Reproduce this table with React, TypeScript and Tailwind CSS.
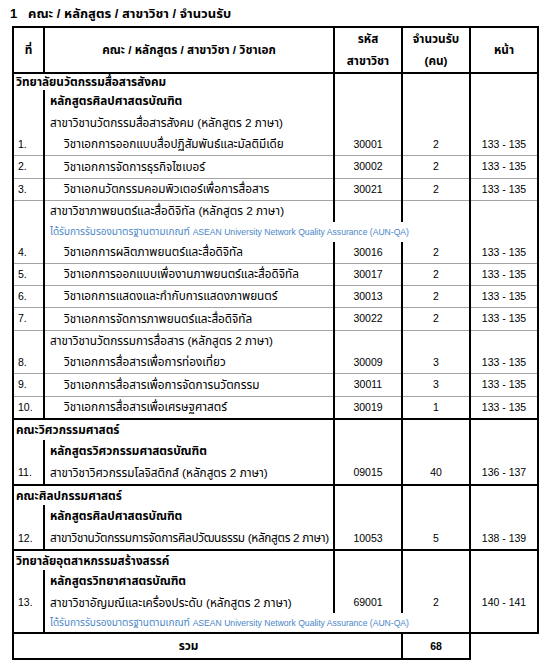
import React from 'react';

type Row =
  | { k: 'fac'; text: string; h: number }
  | { k: 'prog'; text: string; h: number }
  | { k: 'branch'; text: string; h: number }
  | { k: 'note'; h: number }
  | {
      k: 'item';
      no: string;
      text: string;
      code: string;
      n: string;
      pages: string;
      h: number;
      indent?: boolean;
      tight?: boolean;
    };

const rows: Row[] = [
  { k: 'fac', text: 'วิทยาลัยนวัตกรรมสื่อสารสังคม', h: 17 },
  { k: 'prog', text: 'หลักสูตรศิลปศาสตรบัณฑิต', h: 22 },
  { k: 'branch', text: 'สาขาวิชานวัตกรรมสื่อสารสังคม (หลักสูตร 2 ภาษา)', h: 21 },
  { k: 'item', no: '1.', text: 'วิชาเอกการออกแบบสื่อปฏิสัมพันธ์และมัลติมีเดีย', code: '30001', n: '2', pages: '133 - 135', h: 22, indent: true },
  { k: 'item', no: '2.', text: 'วิชาเอกการจัดการธุรกิจไซเบอร์', code: '30002', n: '2', pages: '133 - 135', h: 23, indent: true },
  { k: 'item', no: '3.', text: 'วิชาเอกนวัตกรรมคอมพิวเตอร์เพื่อการสื่อสาร', code: '30021', n: '2', pages: '133 - 135', h: 22, indent: true },
  { k: 'branch', text: 'สาขาวิชาภาพยนตร์และสื่อดิจิทัล (หลักสูตร 2 ภาษา)', h: 22 },
  { k: 'note', h: 20 },
  { k: 'item', no: '4.', text: 'วิชาเอกการผลิตภาพยนตร์และสื่อดิจิทัล', code: '30016', n: '2', pages: '133 - 135', h: 21, indent: true },
  { k: 'item', no: '5.', text: 'วิชาเอกการออกแบบเพื่องานภาพยนตร์และสื่อดิจิทัล', code: '30017', n: '2', pages: '133 - 135', h: 22, indent: true },
  { k: 'item', no: '6.', text: 'วิชาเอกการแสดงและกำกับการแสดงภาพยนตร์', code: '30013', n: '2', pages: '133 - 135', h: 22, indent: true },
  { k: 'item', no: '7.', text: 'วิชาเอกการจัดการภาพยนตร์และสื่อดิจิทัล', code: '30022', n: '2', pages: '133 - 135', h: 23, indent: true },
  { k: 'branch', text: 'สาขาวิชานวัตกรรมการสื่อสาร (หลักสูตร 2 ภาษา)', h: 22 },
  { k: 'item', no: '8.', text: 'วิชาเอกการสื่อสารเพื่อการท่องเที่ยว', code: '30009', n: '3', pages: '133 - 135', h: 21, indent: true },
  { k: 'item', no: '9.', text: 'วิชาเอกการสื่อสารเพื่อการจัดการนวัตกรรม', code: '30011', n: '3', pages: '133 - 135', h: 23, indent: true },
  { k: 'item', no: '10.', text: 'วิชาเอกการสื่อสารเพื่อเศรษฐศาสตร์', code: '30019', n: '1', pages: '133 - 135', h: 23, indent: true },
  { k: 'fac', text: 'คณะวิศวกรรมศาสตร์', h: 21 },
  { k: 'prog', text: 'หลักสูตรวิศวกรรมศาสตรบัณฑิต', h: 21 },
  { k: 'item', no: '11.', text: 'สาขาวิชาวิศวกรรมโลจิสติกส์ (หลักสูตร 2 ภาษา)', code: '09015', n: '40', pages: '136 - 137', h: 24 },
  { k: 'fac', text: 'คณะศิลปกรรมศาสตร์', h: 20 },
  { k: 'prog', text: 'หลักสูตรศิลปศาสตรบัณฑิต', h: 22 },
  { k: 'item', no: '12.', text: 'สาขาวิชานวัตกรรมการจัดการศิลปวัฒนธรรม (หลักสูตร 2 ภาษา)', code: '10053', n: '5', pages: '138 - 139', h: 23, tight: true },
  { k: 'fac', text: 'วิทยาลัยอุตสาหกรรมสร้างสรรค์', h: 20 },
  { k: 'prog', text: 'หลักสูตรวิทยาศาสตรบัณฑิต', h: 22 },
  { k: 'item', no: '13.', text: 'สาขาวิชาอัญมณีและเครื่องประดับ (หลักสูตร 2 ภาษา)', code: '69001', n: '2', pages: '140 - 141', h: 21 },
  { k: 'note', h: 20 },
];

const V = 'border-r-2 border-r-black';
const cellY = 'p-0 align-middle';

// black rule before each faculty and at the end, grey rule between numbered rows
function bottomOf(i: number): string {
  const r = rows[i];
  const next = rows[i + 1];
  if (!next || next.k === 'fac') return 'border-b-2 border-b-black';
  if (r.k === 'item' && next.k !== 'note') return 'border-b border-b-[#a3a3a3]';
  return '';
}

function BodyRow({ r, i }: { r: Row; i: number }) {
  const b = bottomOf(i);
  if (r.k === 'fac') {
    return (
      <tr style={{ height: r.h }}>
        <td colSpan={2} className={`${cellY} ${V} ${b} pl-[2px] font-bold`}>
          {r.text}
        </td>
        <td className={`${cellY} ${V} ${b}`} />
        <td className={`${cellY} ${V} ${b}`} />
        <td className={`${cellY} ${V} ${b}`} />
      </tr>
    );
  }
  if (r.k === 'prog' || r.k === 'branch') {
    return (
      <tr style={{ height: r.h }}>
        <td className={`${cellY} ${V} ${b}`} />
        <td className={`${cellY} ${V} ${b} pl-[5px] ${r.k === 'prog' ? 'font-bold' : ''}`}>
          {r.text}
        </td>
        <td className={`${cellY} ${V} ${b}`} />
        <td className={`${cellY} ${V} ${b}`} />
        <td className={`${cellY} ${V} ${b}`} />
      </tr>
    );
  }
  if (r.k === 'note') {
    return (
      <tr style={{ height: r.h }}>
        <td className={`${cellY} ${V} ${b}`} />
        <td
          colSpan={3}
          className={`${cellY} ${V} ${b} pl-[5px] text-[10px] whitespace-nowrap text-[#4a86c8]`}
        >
          ได้รับการรับรองมาตรฐานตามเกณฑ์{' '}
          <span className="text-[8.6px]">ASEAN University Network Quality Assurance (AUN-QA)</span>
        </td>
        <td className={`${cellY} ${V} ${b}`} />
      </tr>
    );
  }
  return (
    <tr style={{ height: r.h }}>
      <td className={`${cellY} ${V} ${b} pl-[4px] text-[10.5px]`}>{r.no}</td>
      <td
        className={`${cellY} ${V} ${b} ${r.indent ? 'pl-[19px]' : 'pl-[5px]'} ${
          r.tight ? 'tracking-[-0.3px]' : ''
        } whitespace-nowrap`}
      >
        {r.text}
      </td>
      <td className={`${cellY} ${V} ${b} text-center text-[10.5px]`}>{r.code}</td>
      <td className={`${cellY} ${V} ${b} text-center text-[10.5px]`}>{r.n}</td>
      <td className={`${cellY} ${V} ${b} text-center text-[10.5px]`}>{r.pages}</td>
    </tr>
  );
}

const th = `${cellY} ${V} border-t-2 border-t-black border-b-2 border-b-black text-center`;

export default function App() {
  return (
    <div className="w-[542px] h-[660px] bg-white text-black font-['Liberation_Sans','Noto_Sans_Thai',sans-serif] text-[11.75px] leading-none overflow-hidden">
      <div className="flex items-center h-[26px] pl-[10px] font-bold text-[13px]">
        <span className="w-[18px]">1</span>
        <span>คณะ / หลักสูตร / สาขาวิชา / จำนวนรับ</span>
      </div>
      <table className="ml-[12px] w-[526px] table-fixed border-collapse border-l-2 border-l-black">
        <colgroup>
          <col className="w-[31px]" />
          <col className="w-[290px]" />
          <col className="w-[68px]" />
          <col className="w-[68px]" />
          <col className="w-[68px]" />
        </colgroup>
        <thead>
          <tr className="h-[43px] font-bold">
            <th className={th}>ที่</th>
            <th className={th}>คณะ / หลักสูตร / สาขาวิชา / วิชาเอก</th>
            <th className={`${th} leading-[22px]`}>
              รหัส
              <br />
              สาขาวิชา
            </th>
            <th className={`${th} leading-[22px]`}>
              จำนวนรับ
              <br />
              (คน)
            </th>
            <th className={th}>หน้า</th>
          </tr>
        </thead>
        <tbody>
          {rows.map((r, i) => (
            <BodyRow key={i} r={r} i={i} />
          ))}
          <tr className="h-[26px] font-bold">
            <td colSpan={3} className={`${cellY} ${V} border-b-2 border-b-black text-center pr-[38px]`}>
              รวม
            </td>
            <td className={`${cellY} ${V} border-b-2 border-b-black text-center text-[10.5px]`}>68</td>
            <td className="p-0" />
          </tr>
        </tbody>
      </table>
    </div>
  );
}
